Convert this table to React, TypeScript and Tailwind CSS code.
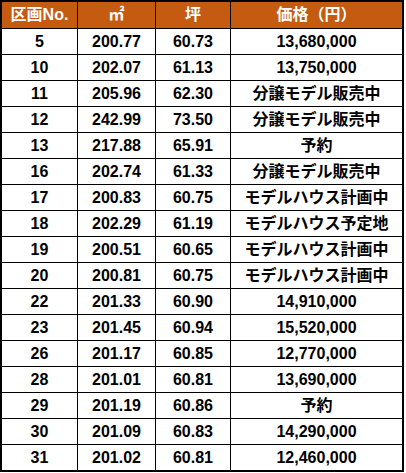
import React from 'react';

type Lot = {
  no: string;
  sqm: string;
  tsubo: string;
  price: string;
};

const lots: Lot[] = [
  { no: '5', sqm: '200.77', tsubo: '60.73', price: '13,680,000' },
  { no: '10', sqm: '202.07', tsubo: '61.13', price: '13,750,000' },
  { no: '11', sqm: '205.96', tsubo: '62.30', price: '分譲モデル販売中' },
  { no: '12', sqm: '242.99', tsubo: '73.50', price: '分譲モデル販売中' },
  { no: '13', sqm: '217.88', tsubo: '65.91', price: '予約' },
  { no: '16', sqm: '202.74', tsubo: '61.33', price: '分譲モデル販売中' },
  { no: '17', sqm: '200.83', tsubo: '60.75', price: 'モデルハウス計画中' },
  { no: '18', sqm: '202.29', tsubo: '61.19', price: 'モデルハウス予定地' },
  { no: '19', sqm: '200.51', tsubo: '60.65', price: 'モデルハウス計画中' },
  { no: '20', sqm: '200.81', tsubo: '60.75', price: 'モデルハウス計画中' },
  { no: '22', sqm: '201.33', tsubo: '60.90', price: '14,910,000' },
  { no: '23', sqm: '201.45', tsubo: '60.94', price: '15,520,000' },
  { no: '26', sqm: '201.17', tsubo: '60.85', price: '12,770,000' },
  { no: '28', sqm: '201.01', tsubo: '60.81', price: '13,690,000' },
  { no: '29', sqm: '201.19', tsubo: '60.86', price: '予約' },
  { no: '30', sqm: '201.09', tsubo: '60.83', price: '14,290,000' },
  { no: '31', sqm: '201.02', tsubo: '60.81', price: '12,460,000' },
];

const cols = 'grid grid-cols-[76px_78px_75px_171px]';
const font = { fontFamily: '"Liberation Sans", "Noto Sans CJK JP", sans-serif' };

const Cell = ({ children, last }: { children: React.ReactNode; last?: boolean }) => (
  <div
    className={`flex items-center justify-center ${last ? '' : 'border-r border-black'}`}
  >
    {children}
  </div>
);

const App = () => {
  return (
    <div className="w-[406px] h-[473px] bg-white" style={font}>
      <div className="w-[404px] border-2 border-black text-[16px] font-bold leading-none text-black">
        <div className={`${cols} h-[27px] bg-[#c55a11] text-white border-b border-black`}>
          <Cell>区画No.</Cell>
          <Cell>㎡</Cell>
          <Cell>坪</Cell>
          <Cell last>価格（円）</Cell>
        </div>
        {lots.map((lot, i) => {
          const isLast = i === lots.length - 1;
          return (
            <div
              key={lot.no}
              className={`${cols} ${isLast ? 'h-[25px]' : 'h-[26px] border-b border-black'}`}
            >
              <Cell>{lot.no}</Cell>
              <Cell>{lot.sqm}</Cell>
              <Cell>{lot.tsubo}</Cell>
              <Cell last>{lot.price}</Cell>
            </div>
          );
        })}
      </div>
    </div>
  );
};

export default App;
